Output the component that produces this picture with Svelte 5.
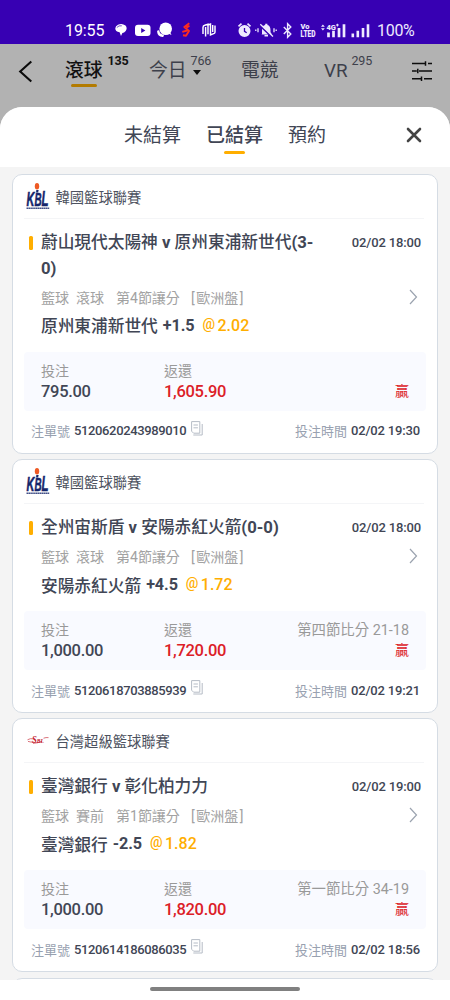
<script>
  const bets = [
    {
      logo: 'kbl', league: '韓國籃球聯賽', home: '蔚山現代太陽神', away: '原州東浦新世代', score: '(3-0)', date: '02/02 18:00',
      phase: '滾球', market: ['第', '4', '節讓分'], pick: '原州東浦新世代', line: '+1.5', odds: '2.02',
      stake: '795.00', payout: '1,605.90', section: '', result: '', id: '5120620243989010', time: '02/02 19:30'
    },
    {
      logo: 'kbl', league: '韓國籃球聯賽', home: '全州宙斯盾', away: '安陽赤紅火箭', score: '(0-0)', date: '02/02 18:00',
      phase: '滾球', market: ['第', '4', '節讓分'], pick: '安陽赤紅火箭', line: '+4.5', odds: '1.72',
      stake: '1,000.00', payout: '1,720.00', section: '第四節比分', result: '21-18', id: '5120618703885939', time: '02/02 19:21'
    },
    {
      logo: 'sbl', league: '台灣超級籃球聯賽', home: '臺灣銀行', away: '彰化柏力力', score: '', date: '02/02 19:00',
      phase: '賽前', market: ['第', '1', '節讓分'], pick: '臺灣銀行', line: '-2.5', odds: '1.82',
      stake: '1,000.00', payout: '1,820.00', section: '第一節比分', result: '34-19', id: '5120614186086035', time: '02/02 18:56'
    }
  ];
</script>

{#snippet leagueLogo(kind)}
  {#if kind === 'kbl'}
    <svg class="logo" width="24" height="28" viewBox="0 0 24 28">
      <text x="0.500" y="23.500" font-family="Liberation Sans" font-weight="700" font-style="italic" fill="#15266b" stroke="#15266b" stroke-width=".6" textLength="22" lengthAdjust="spacingAndGlyphs"><tspan font-size="21">K</tspan><tspan font-size="19">B</tspan><tspan font-size="22">L</tspan></text>
      <ellipse cx="11" cy="4.200" rx="2.200" ry="3.200" fill="#ee5a24" />
      <path d="M10.300 8h2.400l-.6 2.500h-2z" fill="#15266b" />
      <path d="M.5 26.300h23" stroke="#15266b" stroke-width="1.500" stroke-dasharray="1.600 .3" opacity=".8" />
    </svg>
  {:else}
    <svg class="logo" width="24" height="28" viewBox="0 0 24 28">
      <path d="M1.500 13.800q3-1.700 5.500-1M2 15.400q3 1.100 5.500.4M17.500 12.200q2.500-.9 5-.6" fill="none" stroke="#d0505a" stroke-width=".8" />
      <path d="M7 17.200q5-.2 9-1.700" fill="none" stroke="#c4202f" stroke-width=".8" />
      <text x="6" y="16.800" font-family="Liberation Serif" font-style="italic" font-weight="700" font-size="10" fill="#c4202f" textLength="12" lengthAdjust="spacingAndGlyphs">S<tspan font-size="6.500">BL</tspan></text>
    </svg>
  {/if}
{/snippet}

<div class="screen">
  <div class="status">
    <span class="clock">19:55</span>
    <svg class="status-icons" width="102" height="18" viewBox="0 0 102 18">
      <path d="M4 3.800q4-2 7.500.8 2.200 2.600.2 5.300-1.600 1.900-3.300 2.100L7 15l-1.400-3.800Q1.200 10.800 1.300 7.300q.2-2.500 2.700-3.500z" fill="#fff" />
      <path d="M2.800 6.500q2-2.300 5-1.700" stroke="#3700b3" stroke-width=".7" fill="none" />
      <rect x="21" y="3.700" width="15.500" height="11.200" rx="3" fill="#fff" />
      <path d="M27.200 6.900v5l4.200-2.500z" fill="#3700b3" />
      <circle cx="51.700" cy="7.800" r="6.300" fill="#fff" />
      <path d="m53 12 4.500 2-2-4z" fill="#fff" />
      <path d="M43.600 10q-.3 4.700 4.800 5.200" fill="none" stroke="#3700b3" stroke-width="4.600" />
      <path d="M44.300 10.500q.4 3.800 4.400 4.200" fill="none" stroke="#fff" stroke-width="2.400" stroke-linecap="round" />
      <path d="m75.300 2.300-5 3.700 4.700 4-3 4.700-3-.5M75.500 4.800l-3 1.800M68.300 10.800l5-1.300" fill="none" stroke="#ff2b20" stroke-width="1.900" stroke-linejoin="round" />
      <path d="M89 13V6.500q0-1.700 1.700-2.200L94 3.200v10M94 4l2.500-1v10.800l3.700-1.500q.8-.4.800-1.300V4.500M91.600 6v9.500M98.700 4v7" fill="none" stroke="#fff" stroke-width="1.450" />
    </svg>
    <svg class="system-icons" width="134" height="20" viewBox="0 0 134 20">
      <g fill="none" stroke="#eee9ff">
        <circle cx="7.500" cy="9.900" r="4.500" stroke-width="3" fill="#eee9ff" />
        <path d="m1.500 5.300 3-2.600m9 2.600-3-2.600" stroke-width="1.700" />
      </g>
      <path d="M7.500 6.900v3.400l2.200 1.400" stroke="#3700b3" stroke-width="1.300" fill="none" />
      <g transform="translate(0 -.8)">
        <path d="M25 14v-4q0-4.500 3.200-5.200V3.500h2.200v1.300q3.100.8 3.100 5.200v2l1.500 2.300H24z" fill="#eee9ff" />
        <path d="M27.500 15.500h3.500" stroke="#eee9ff" stroke-width="1.600" />
        <path d="m22.500 5 12.500 12" stroke="#3700b3" stroke-width="1.800" />
        <path d="m23.300 4 12.700 12.300" stroke="#eee9ff" stroke-width="1.300" />
        <path d="M21 8v4M18.800 9.200v1.600M37 8v4M39.200 9.200v1.600" stroke="#eee9ff" stroke-width="1.300" />
      </g>
      <path d="m46.800 6 7 7-3.200 3.200V2.800L53.800 6l-7 7" fill="none" stroke="#eee9ff" stroke-width="1.400" />
      <g fill="#eee9ff" font-family="Roboto" font-weight="900">
        <text x="63.500" y="8.300" font-size="8" textLength="9" lengthAdjust="spacingAndGlyphs">Vo</text>
        <text x="63.500" y="15.900" font-size="8.500" textLength="15" lengthAdjust="spacingAndGlyphs">LTED</text>
        <text x="89.500" y="8.800" font-size="8" textLength="9.500" lengthAdjust="spacingAndGlyphs">4G</text>
      </g>
      <path d="m84 5.700 1.900-2.200 1.900 2.200zm0 1.600 1.900 2.200 1.900-2.200zM99 3.600h2.800v1H99zM99.900 2.700h1v2.800h-1z" fill="#eee9ff" />
      <path d="M91.500 11.500v4.700M96.500 9.800v6.400M102 7v9.200M107 3.300v12.900" stroke="#eee9ff" stroke-width="2.700" />
      <path d="M115.800 12.500v3.700M120.800 9.800v6.400M126 7v9.200M131 3.300v12.900" stroke="#eee9ff" stroke-width="2.600" />
    </svg>
    <span class="battery">100%</span>
  </div>

  <nav class="top">
    <svg class="back" width="16" height="24" viewBox="0 0 16 24"><path d="M13.300 1.500 2.200 11.500l11.100 10" fill="none" stroke="#0b0b0b" stroke-width="2.100" /></svg>
    <div class="nav-item live on"><span>滾球</span><sup>135</sup></div>
    <div class="nav-item today"><span>今日</span><sup>766</sup><i class="caret"></i></div>
    <div class="nav-item esports"><span>電競</span></div>
    <div class="nav-item vr"><span>VR</span><sup>295</sup></div>
    <svg class="filter" width="20" height="20" viewBox="0 0 20 20"><path d="M0 2.500h13.500M16 2.500h4M13.500.300v4.400M0 10h4.800M7 10h13M5.800 7.800v4.400M0 17.700h9.500M12 17.700h8M9.500 15.500v4.400" fill="none" stroke="#0d0d0d" stroke-width="1.500" /></svg>
  </nav>

  <main class="sheet">
    <div class="tabs">
      <span class="tab">未結算</span>
      <span class="tab active">已結算</span>
      <span class="tab">預約</span>
      <svg class="close" width="16" height="16" viewBox="0 0 16 16"><path d="m2 2 12 12M14 2 2 14" stroke="#444" stroke-width="2.600" stroke-linecap="round" /></svg>
    </div>

    <div class="list">
      {#each bets as bet}
        <article class="card">
          <header>{@render leagueLogo(bet.logo)}<span>{bet.league}</span></header>
          <div class="match">
            <i class="mark"></i>
            <h2>{bet.home} <b>v</b> {bet.away}<b>{bet.score}</b></h2>
            <time>{bet.date}</time>
          </div>
          <div class="detail">
            <span>籃球</span><span class="phase">{bet.phase}</span>
            <span class="market">{bet.market[0]}<em>{bet.market[1]}</em>{bet.market[2]}</span>
            <span class="odds-type">[<em>歐洲盤</em>]</span>
            <svg class="arrow" width="9" height="16" viewBox="0 0 9 16"><path d="m1 1 6.500 7L1 15" fill="none" stroke="#9ba3af" stroke-width="1.200" /></svg>
          </div>
          <div class="pick"><span>{bet.pick}</span><b>{bet.line}</b><span class="at">@</span><span class="odds">{bet.odds}</span></div>
          <div class="amounts">
            <div class="stake"><span class="label">投注</span><span class="num">{bet.stake}</span></div>
            <div class="payout"><span class="label">返還</span><span class="num">{bet.payout}</span></div>
            <div class="result"><span class="label">{bet.section} <em>{bet.result}</em></span><span class="won">贏</span></div>
          </div>
          <footer>
            <span>注單號</span><b class="id">{bet.id}</b>
            <svg class="copy" width="12" height="15" viewBox="0 0 12 15"><path d="M.6.600h8.200v11.600H2.600l-2-2zM2.500 4h4.400M2.500 6.800h4.400M2.300 14h8.900V3" fill="none" stroke="#b5bcc6" stroke-width="1" /></svg>
            <span class="time-label">投注時間</span><b class="time">{bet.time}</b>
          </footer>
        </article>
      {/each}
      <article class="card next"></article>
    </div>
  </main>
  <div class="home"><i></i></div>
</div>

<style>
  :global(body) { margin: 0; background: #fff; }
  .screen { width: 450px; height: 1000px; overflow: hidden; display: flex; flex-direction: column; background: #b2b2b2; color: #414655; font-family: Roboto, "Noto Sans CJK TC", sans-serif; }
  .screen :global(svg) { display: block; flex: none; }
  i, em { font-style: normal; }
  .status { height: 44px; flex: none; background: #3700b3; color: #eee9ff; display: flex; box-sizing: border-box; padding: 21px 0 0 65px; }
  .clock { width: 49px; font-size: 16px; line-height: 20px; color: #fff; letter-spacing: -.1px; }
  .system-icons { margin-left: 21px; }
  .battery { margin-left: 6px; font-size: 16px; line-height: 20px; letter-spacing: -.3px; }

  .top { height: 63px; flex: none; box-sizing: border-box; display: flex; align-items: flex-start; padding: 14px 17px 0 18px; }
  .back { margin-top: 2px; }
  .nav-item { display: flex; height: 34px; font-size: 18.800px; line-height: 26px; position: relative; color: #3d404b; flex: none; }
  .nav-item span { white-space: nowrap; }
  .nav-item sup { font-size: 12.500px; line-height: 14px; margin-top: -4px; letter-spacing: -.2px; }
  .live { width: 84px; margin-left: 31px; }
  .on { color: #111; font-weight: 500; }
  .on sup { font-weight: 700; margin-left: 5px; }
  .on::after { content: ""; position: absolute; left: 6px; top: 26px; width: 26px; height: 3px; border-radius: 2px; background: #b37b00; }
  .today { width: 92px; }
  .today sup { margin-left: 4px; }
  .caret { position: absolute; left: 44px; top: 12px; border: 4px solid transparent; border-top: 5px solid #0d0d0d; border-bottom: 0; }
  .esports { width: 83px; }
  .vr { width: 88px; }
  .vr sup { margin-left: 4px; }
  .filter { margin-top: 3px; }

  .sheet { height: 873px; flex: none; border-radius: 22px 22px 0 0; overflow: hidden; background: #f4f4f4; }
  .tabs { height: 60px; background: #fff; display: flex; box-sizing: border-box; padding: 15px 28px 0 124px; font-size: 19px; line-height: 28px; }
  .tab { margin-right: 25px; height: 32px; position: relative; }
  .active { font-weight: 500; }
  .active::after { content: ""; position: absolute; left: 18px; bottom: 0; width: 21px; height: 3px; border-radius: 2px; background: #ffae00; }
  .close { margin: 5px 0 0 auto; }

  .list { padding: 7.300px 12px 0; display: flex; flex-direction: column; gap: 5.300px; }
  .card { box-sizing: border-box; border: 1px solid #d5dce4; border-radius: 10px; background: #fff; padding: 0 11px; }
  .next { height: 30px; }
  header { height: 44px; box-sizing: border-box; border-bottom: 1px solid #f4f5f7; margin-right: 2px; padding: 0 0 1px 2px; display: flex; align-items: center; font-size: 14.300px; color: #4d5260; }
  header span { margin-left: 5.500px; }
  .match { display: flex; align-items: flex-start; padding: 11px 5px 0 4px; }
  .mark { width: 4px; height: 14px; margin: 6px 8px 0 1px; border-radius: 1.500px; background: #ffae00; flex: none; }
  h2 { margin: 0; width: 282px; font-size: 16.700px; line-height: 25.400px; font-weight: 500; }
  h2 b { font-weight: 700; line-height: 1; }
  time { margin-left: auto; font-size: 13px; line-height: 25px; font-weight: 500; white-space: nowrap; letter-spacing: -.15px; }
  .detail { display: flex; align-items: center; height: 22px; margin-top: 4.600px; padding: 0 8px 0 17px; font-size: 14px; color: #a2a2a2; }
  .phase { margin-left: 7px; }
  .market { margin-left: 12px; width: 65px; white-space: nowrap; }
  .odds-type { margin-left: 10px; }
  .odds-type em { margin: 0 1.500px; }
  .arrow { margin-left: auto; }
  .pick { display: flex; align-items: center; height: 25px; margin-top: 5px; padding-left: 17px; font-size: 16.700px; font-weight: 500; }
  .pick b { margin-left: 5px; font-size: 16.200px; font-weight: 700; letter-spacing: -.1px; }
  .at { margin: -3px 0 0 8px; width: 15px; font-size: 14px; color: #ffae00; }
  .odds { color: #ffae00; font-size: 16px; }
  .amounts { display: flex; margin-top: 14px; height: 59px; box-sizing: border-box; padding: 9px 16px 0 17px; background: #f9faff; border-radius: 4px; }
  .amounts > div { display: flex; flex-direction: column; }
  .label { font-size: 14px; line-height: 20px; color: #999; height: 20px; white-space: nowrap; }
  .num { font-size: 16.500px; font-weight: 500; line-height: 22px; letter-spacing: -.3px; }
  .stake { width: 123px; }
  .payout .num { color: #dc2027; }
  .result { margin-left: auto; align-items: flex-end; }
  .result .label { font-size: 14.400px; line-height: 21px; margin-right: 1px; }
  .won { color: #dc2027; font-size: 14px; line-height: 20px; margin-right: 1px; }
  footer { display: flex; align-items: center; height: 42px; padding: 0 6px 2px 7px; box-sizing: border-box; font-size: 13px; color: #98a1b0; }
  footer b { color: #414655; font-weight: 500; margin-left: 4px; }
  .id { letter-spacing: -.37px; }
  .copy { margin: -5px 0 0 5px; }
  .time-label { margin-left: auto; }
  .time { letter-spacing: -.17px; }
  .home { height: 20px; background: #fff; display: flex; justify-content: center; }
  .home i { width: 150px; height: 4px; border-radius: 2px; background: #808080; margin-top: 7px; }
</style>
